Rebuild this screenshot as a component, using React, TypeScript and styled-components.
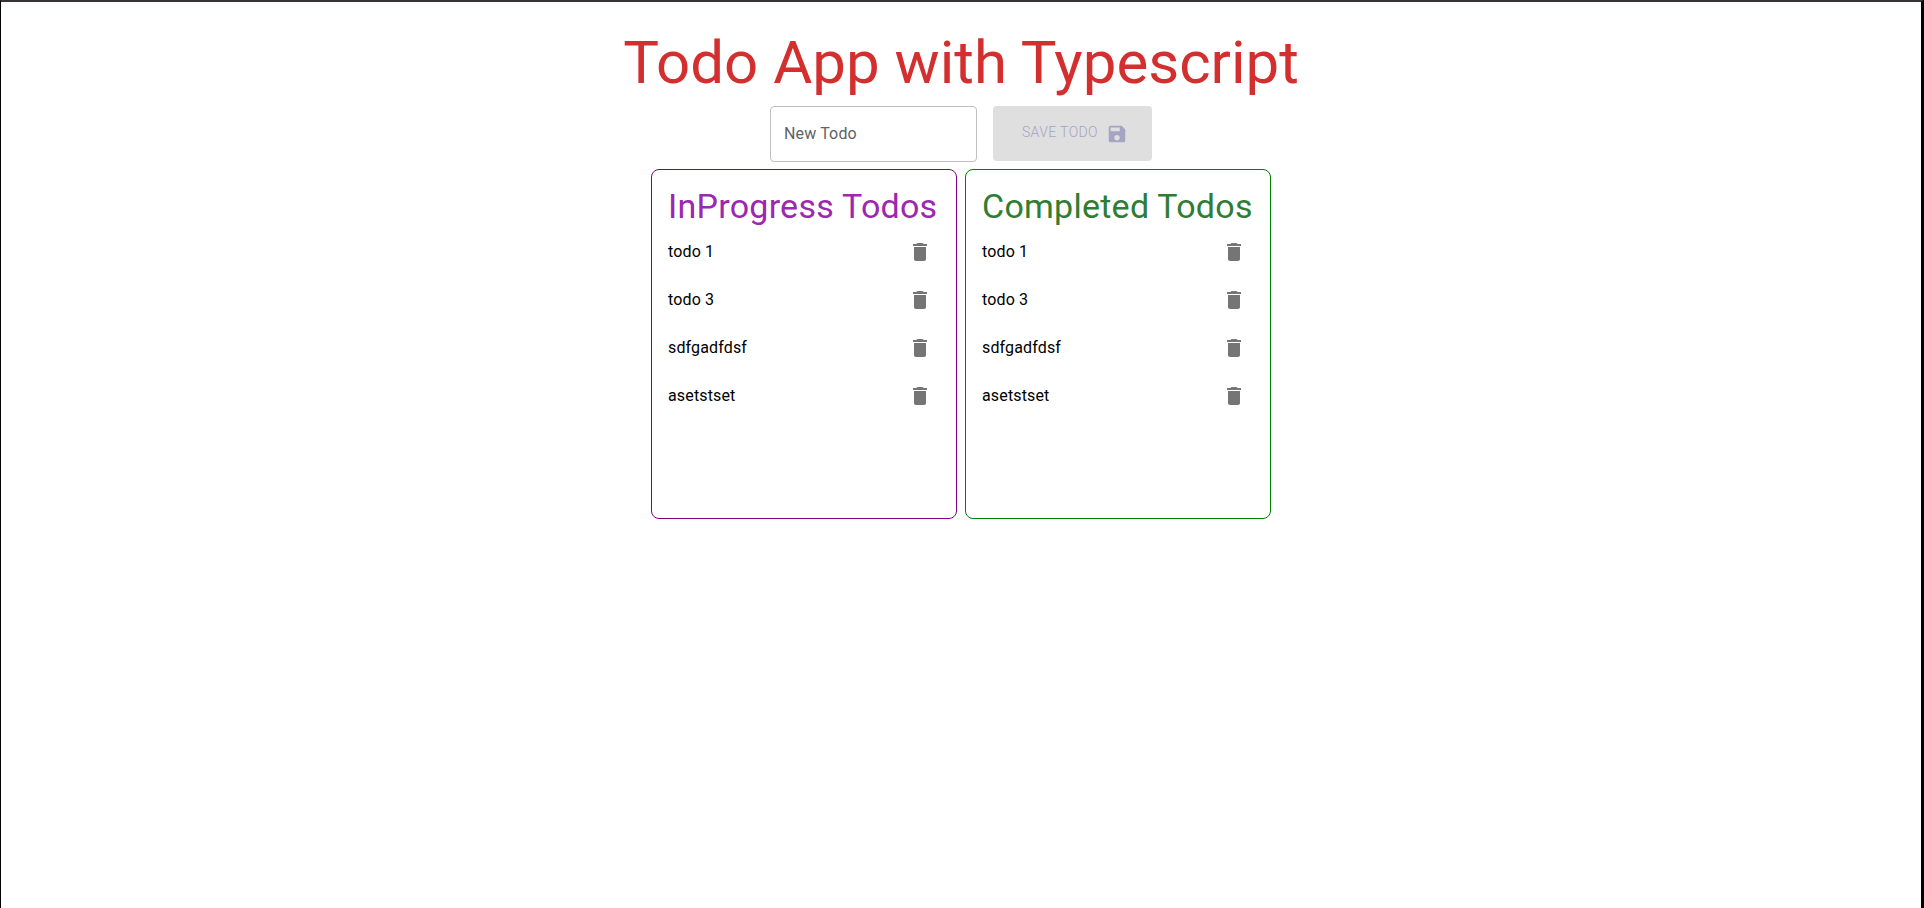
import React, { useState } from 'react';
import styled, { createGlobalStyle } from 'styled-components';

const GlobalStyle = createGlobalStyle`
  *, *::before, *::after { box-sizing: border-box; }
  body {
    margin: 0;
    background: #fff;
    color: #000;
    font-family: Roboto, "Liberation Sans", sans-serif;
    font-size: 16px;
    line-height: 24px;
  }
`;

const Page = styled.main`
  min-height: 100vh;
  display: flex;
  flex-direction: column;
  align-items: center;
  padding: 25px 0;
  border-top: 2px solid #383436;
  border-left: 1px solid #000;
  border-right: 3px solid #000;
`;

const Title = styled.h1`
  margin: 0 0 7px;
  color: #d32f2f;
  font-size: 60px;
  font-weight: 400;
  line-height: 72px;
`;

const TodoForm = styled.form`
  display: flex;
  gap: 16px;
  margin-bottom: 7px;
`;

const TodoInput = styled.input`
  width: 207px;
  height: 56px;
  padding: 0 13px 2px;
  border: 1px solid #c0c0c0;
  border-radius: 4px;
  background: transparent;
  color: #000;
  font: inherit;
  letter-spacing: 0.00938em;
  &::placeholder { color: #626262; opacity: 1; }
`;

const SaveButton = styled.button`
  display: flex;
  align-items: center;
  justify-content: flex-end;
  width: 159px;
  height: 55px;
  padding: 0 24px;
  border: 0;
  border-radius: 4px;
  background: #dfdfdf;
  color: #a5a4c2;
  font: inherit;
  font-size: 14px;
  font-weight: 300;
  line-height: 18px;
  letter-spacing: 0.02857em;
  text-transform: uppercase;
`;

const SaveLabel = styled.span`
  display: flex;
  align-items: flex-start;
  gap: 8px;
`;

const Board = styled.div`
  display: flex;
  gap: 8px;
`;

const Panel = styled.section<{ $line: string }>`
  min-width: 306px;
  min-height: 350px;
  padding: 15px 16px;
  border: 1px solid ${(p) => p.$line};
  border-radius: 8px;
`;

const PanelTitle = styled.h2<{ $tone: string }>`
  margin: 0 0 5px;
  color: ${(p) => p.$tone};
  font-size: 34px;
  font-weight: 400;
  line-height: 42px;
  letter-spacing: 0.00735em;
`;

const TodoList = styled.ul`
  display: flex;
  flex-direction: column;
  gap: 8px;
  margin: 0;
  padding: 0;
  list-style: none;
`;

const TodoRow = styled.li`
  display: flex;
  align-items: center;
  justify-content: space-between;
  letter-spacing: 0.00938em;
`;

const DeleteButton = styled.button`
  display: flex;
  padding: 8px;
  border: 0;
  border-radius: 50%;
  background: transparent;
  color: #757575;
  cursor: pointer;
`;

const Icon = styled.svg<{ $size: number }>`
  width: ${(p) => p.$size}px;
  height: ${(p) => p.$size}px;
  fill: currentColor;
`;

const SaveIcon = () => (
  <Icon $size={22} viewBox="0 0 24 24" aria-hidden="true">
    <path d="M17 3H5c-1.11 0-2 .9-2 2v14c0 1.1.89 2 2 2h14c1.1 0 2-.9 2-2V7l-4-4zm-5 16c-1.66 0-3-1.34-3-3s1.34-3 3-3 3 1.34 3 3-1.34 3-3 3zm3-10H5V5h10v4z" />
  </Icon>
);

const DeleteIcon = () => (
  <Icon $size={24} viewBox="0 0 24 24" aria-hidden="true">
    <path d="M6 19c0 1.1.9 2 2 2h8c1.1 0 2-.9 2-2V7H6v12zM19 4h-3.5l-1-1h-5l-1 1H5v2h14V4z" />
  </Icon>
);

const todos = ['todo 1', 'todo 3', 'sdfgadfdsf', 'asetstset'];

interface TodoPanelProps {
  title: string;
  tone: string;
  line: string;
}

function TodoPanel({ title, tone, line }: TodoPanelProps) {
  const [items, setItems] = useState(todos);
  return (
    <Panel $line={line}>
      <PanelTitle $tone={tone}>{title}</PanelTitle>
      <TodoList>
        {items.map((item) => (
          <TodoRow key={item}>
            {item}
            <DeleteButton
              type="button"
              aria-label={`Delete ${item}`}
              onClick={() => setItems(items.filter((other) => other !== item))}
            >
              <DeleteIcon />
            </DeleteButton>
          </TodoRow>
        ))}
      </TodoList>
    </Panel>
  );
}

export default function App() {
  return (
    <>
      <GlobalStyle />
      <Page>
        <Title>Todo App with Typescript</Title>
        <TodoForm onSubmit={(event) => event.preventDefault()}>
          <TodoInput type="text" aria-label="New Todo" placeholder="New Todo" />
          <SaveButton type="submit" disabled>
            <SaveLabel>
              Save Todo
              <SaveIcon />
            </SaveLabel>
          </SaveButton>
        </TodoForm>
        <Board>
          <TodoPanel title="InProgress Todos" tone="#9c27b0" line="purple" />
          <TodoPanel title="Completed Todos" tone="#2e7d32" line="green" />
        </Board>
      </Page>
    </>
  );
}
